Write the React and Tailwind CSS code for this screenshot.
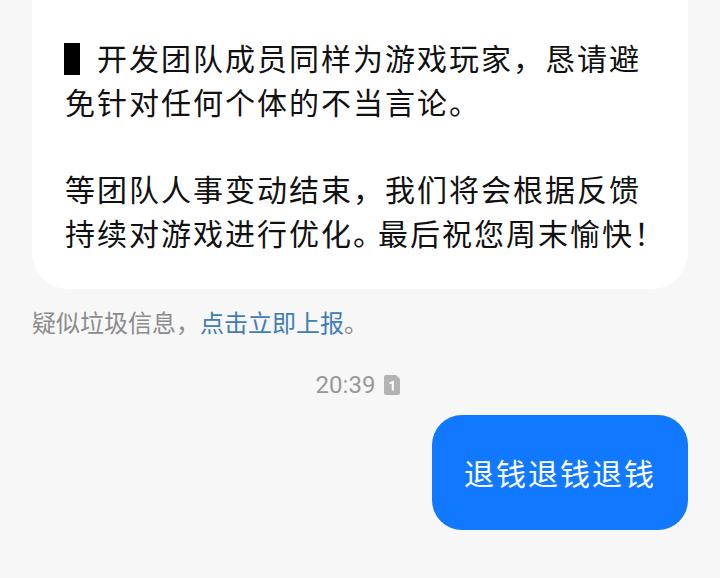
export default function App() {
  const font = { fontFamily: '"Noto Sans CJK SC", sans-serif' };
  return (
    <div className="w-[720px] h-[578px] overflow-hidden bg-[#f7f7f7] flex flex-col px-8" style={font}>
      <div className="h-[289px] bg-white rounded-b-[36px] pl-[33px] pt-[35px] text-[30px] leading-[44px] text-[#111111] shrink-0">
        <div className="flex items-center h-[44px] whitespace-nowrap">
          <span className="w-4 h-8 bg-black shrink-0 -ml-px mr-[17px] mt-1"></span>
          <span className="tracking-[2px]">开发团队成员同样为游戏玩家，恳请避</span>
        </div>
        <div className="tracking-[2px] whitespace-nowrap">免针对任何个体的不当言论。</div>
        <div className="h-[43px]"></div>
        <div className="tracking-[2px] whitespace-nowrap">等团队人事变动结束，我们将会根据反馈</div>
        <div className="tracking-[2px] whitespace-nowrap">
          持续对游戏进行优化<span className="tracking-[-5px]">。</span>最后祝您周末愉快！
        </div>
      </div>
      <div className="mt-4 text-[24px] leading-[34px] whitespace-nowrap text-[#8c8c8c]">
        疑似垃圾信息，<span className="text-[#3f7cb8]">点击立即上报</span>。
      </div>
      <div className="mt-[33px] flex items-center justify-center gap-[9px] h-[26px] pr-1">
        <span className="text-[24px] text-[#999999]" style={{ fontFamily: 'Roboto, sans-serif' }}>20:39</span>
        <svg width="16" height="20" viewBox="0 0 16 20" aria-hidden="true">
          <path d="M2 0H12L16 4V18a2 2 0 0 1-2 2H2a2 2 0 0 1-2-2V2a2 2 0 0 1 2-2Z" fill="#b3b3b3" />
          <path d="M5.5 7.5 L9.8 5.5V15.5H7.8V8.4L5.5 9.2Z" fill="#ffffff" />
        </svg>
      </div>
      <div className="mt-[17px] flex justify-end">
        <div className="w-[256px] h-[115px] rounded-[30px] bg-[#1079ff] text-white text-[30px] flex items-center justify-center whitespace-nowrap tracking-[2px]">
          退钱退钱退钱
        </div>
      </div>
    </div>
  );
}
